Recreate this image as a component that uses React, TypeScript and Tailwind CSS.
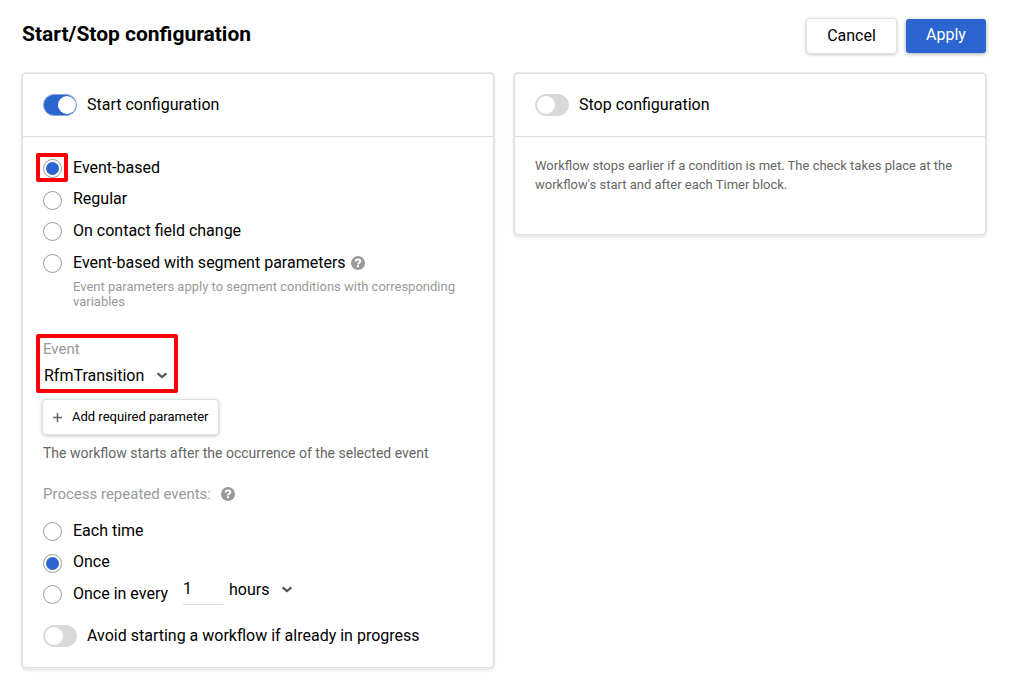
import { useState } from "react";
import clsx from "clsx";

type StartMode = "event" | "regular" | "field" | "segment";
type RepeatMode = "each" | "once" | "interval";

interface RadioProps {
  checked: boolean;
  onSelect: () => void;
  label: string;
  className?: string;
  dotClassName?: string;
  highlighted?: boolean;
  hint?: boolean;
}

function Radio({ checked, onSelect, label, className, dotClassName, highlighted, hint }: RadioProps) {
  return (
    <button type="button" role="radio" aria-checked={checked} onClick={onSelect} className={clsx("flex items-start text-left", className)}>
      <span className={clsx("relative flex size-[19px] shrink-0 items-center justify-center rounded-full border border-[#9b9b9b]", dotClassName)}>
        {checked && <span className="size-[13px] rounded-full bg-[#2b65cf]" />}
        {highlighted && <span className="absolute -left-2 -top-[7px] h-[29px] w-8 rounded-[2px] border-4 border-[#fb0007]" />}
      </span>
      <span className="ml-[11px] leading-6">{label}</span>
      {hint && <HelpIcon className="ml-[5px] mt-[5px]" />}
    </button>
  );
}

function Toggle({ on, onChange }: { on: boolean; onChange: (on: boolean) => void }) {
  return (
    <button
      type="button"
      role="switch"
      aria-checked={on}
      onClick={() => onChange(!on)}
      className={clsx("flex h-[22px] w-[34px] shrink-0 items-center rounded-full border", on ? "justify-end border-[#8ba6dc] bg-[#2b65cf]" : "border-[#d9d9d9] bg-[#d9d9d9] px-px")}
    >
      <span className="size-[18px] rounded-full bg-white" />
    </button>
  );
}

function HelpIcon({ className }: { className?: string }) {
  return (
    <svg viewBox="0 0 14 14" className={clsx("size-[14px] shrink-0", className)} aria-label="Help">
      <circle cx="7" cy="7" r="7" fill="#999" />
      <path d="M4.7 5.5C4.7 4.1 5.7 3.4 7 3.4s2.3.7 2.3 1.9C9.3 6.7 7 6.7 7 8.4" fill="none" stroke="#fff" strokeWidth="1.9" />
      <rect x="6" y="9.2" width="2" height="2" fill="#fff" />
    </svg>
  );
}

function Caret({ className }: { className?: string }) {
  return (
    <svg viewBox="0 0 12 8" className={clsx("h-2 w-3 shrink-0", className)}>
      <path d="M1.6 1.4 6 5.1l4.4-3.7" fill="none" stroke="#555" strokeWidth="2.3" />
    </svg>
  );
}

const cardClass = "rounded-[3px] bg-white shadow-[0_0_0_1px_#dfdfdf,0_0_0_2px_#ebebeb,0_2px_4px_rgba(0,0,0,0.22)]";
const raisedClass = "rounded-[3px] bg-white shadow-[0_0_0_1px_#e0e0e0,0_1px_4px_rgba(0,0,0,0.35)]";

export default function App() {
  const [startOn, setStartOn] = useState(true);
  const [stopOn, setStopOn] = useState(false);
  const [avoid, setAvoid] = useState(false);
  const [mode, setMode] = useState<StartMode>("event");
  const [repeat, setRepeat] = useState<RepeatMode>("once");

  return (
    <div className="h-[681px] w-[1015px] overflow-hidden bg-white font-['Roboto','Liberation_Sans',sans-serif] text-base text-black">
      <header className="flex h-[74px] items-start pl-[22px] pr-[29px]">
        <h1 className="mt-5 text-[21px] font-bold leading-7">Start/Stop configuration</h1>
        <div className="ml-auto mt-[19px] flex gap-[10px]">
          <button type="button" className={clsx(raisedClass, "h-[34px] w-[89px]")}>
            Cancel
          </button>
          <button type="button" className="h-[34px] w-20 rounded-[3px] bg-[#2b65cf] pb-[2px] text-white shadow-[0_1px_4px_rgba(0,0,0,0.35)]">
            Apply
          </button>
        </div>
      </header>

      <main className="flex items-start gap-[22px] pl-[23px]">
        <section className={clsx(cardClass, "h-[593px] w-[470px]")}>
          <div className="flex h-[63px] items-center gap-[10px] border-b border-[#dedede] pl-5">
            <Toggle on={startOn} onChange={setStartOn} />
            <span>Start configuration</span>
          </div>

          <div className="flex flex-col items-start pl-5 pt-[19px]">
            <Radio className="h-[31px]" dotClassName="mt-[3px]" label="Event-based" checked={mode === "event"} onSelect={() => setMode("event")} highlighted />
            <Radio className="h-8" dotClassName="mt-1" label="Regular" checked={mode === "regular"} onSelect={() => setMode("regular")} />
            <Radio className="h-8" dotClassName="mt-[3px]" label="On contact field change" checked={mode === "field"} onSelect={() => setMode("field")} />
            <Radio className="h-6" dotClassName="mt-[3px]" label="Event-based with segment parameters" checked={mode === "segment"} onSelect={() => setMode("segment")} hint />
            <p className="ml-[30px] mt-1 w-[400px] text-[13px] leading-[15px] text-[#999]">
              Event parameters apply to segment conditions with corresponding variables
            </p>

            <div className="-ml-[7px] mt-[25px] h-[59px] w-[142px] rounded-[2px] border-4 border-[#fb0007] pl-[3px] pt-px">
              <div className="text-[15px] leading-5 text-[#999]">Event</div>
              <button type="button" className="mt-[5px] flex items-center pl-px leading-6">
                RfmTransition
                <Caret className="ml-3" />
              </button>
            </div>

            <button type="button" className={clsx(raisedClass, "mt-[7px] flex h-[34px] w-[175px] items-center pl-[10px] text-[13px]")}>
              <svg viewBox="0 0 9 9" className="size-[9px] shrink-0">
                <path d="M4.5 0v9M0 4.5h9" stroke="#666" strokeWidth="1.5" />
              </svg>
              <span className="ml-[10px]">Add required parameter</span>
            </button>

            <p className="mt-[9px] text-sm leading-5 text-[#666]">The workflow starts after the occurrence of the selected event</p>

            <div className="mt-[21px] flex items-center text-[15px] leading-5 text-[#999]">
              Process repeated events:
              <HelpIcon className="ml-[10px]" />
            </div>

            <Radio className="mt-[15px] h-[31px]" dotClassName="mt-[3px]" label="Each time" checked={repeat === "each"} onSelect={() => setRepeat("each")} />
            <Radio className="h-8" dotClassName="mt-1" label="Once" checked={repeat === "once"} onSelect={() => setRepeat("once")} />
            <div className="flex h-[42px] items-start">
              <Radio dotClassName="mt-[3px]" label="Once in every" checked={repeat === "interval"} onSelect={() => setRepeat("interval")} />
              <input defaultValue="1" className="-mt-1 ml-[15px] h-[27px] w-10 border-b border-[#dedede] pb-[5px] outline-none" />
              <button type="button" className="-mt-1 ml-[6px] flex items-center leading-6">
                hours
                <Caret className="ml-3" />
              </button>
            </div>
            <div className="flex items-center gap-[10px]">
              <Toggle on={avoid} onChange={setAvoid} />
              <span>Avoid starting a workflow if already in progress</span>
            </div>
          </div>
        </section>

        <section className={clsx(cardClass, "h-[160px] w-[470px]")}>
          <div className="flex h-[63px] items-center gap-[10px] border-b border-[#dedede] pl-5">
            <Toggle on={stopOn} onChange={setStopOn} />
            <span>Stop configuration</span>
          </div>
          <p className="px-5 pt-[19px] text-[13px] leading-[19px] text-[#666]">
            Workflow stops earlier if a condition is met. The check takes place at the workflow's start and after each Timer block.
          </p>
        </section>
      </main>
    </div>
  );
}
